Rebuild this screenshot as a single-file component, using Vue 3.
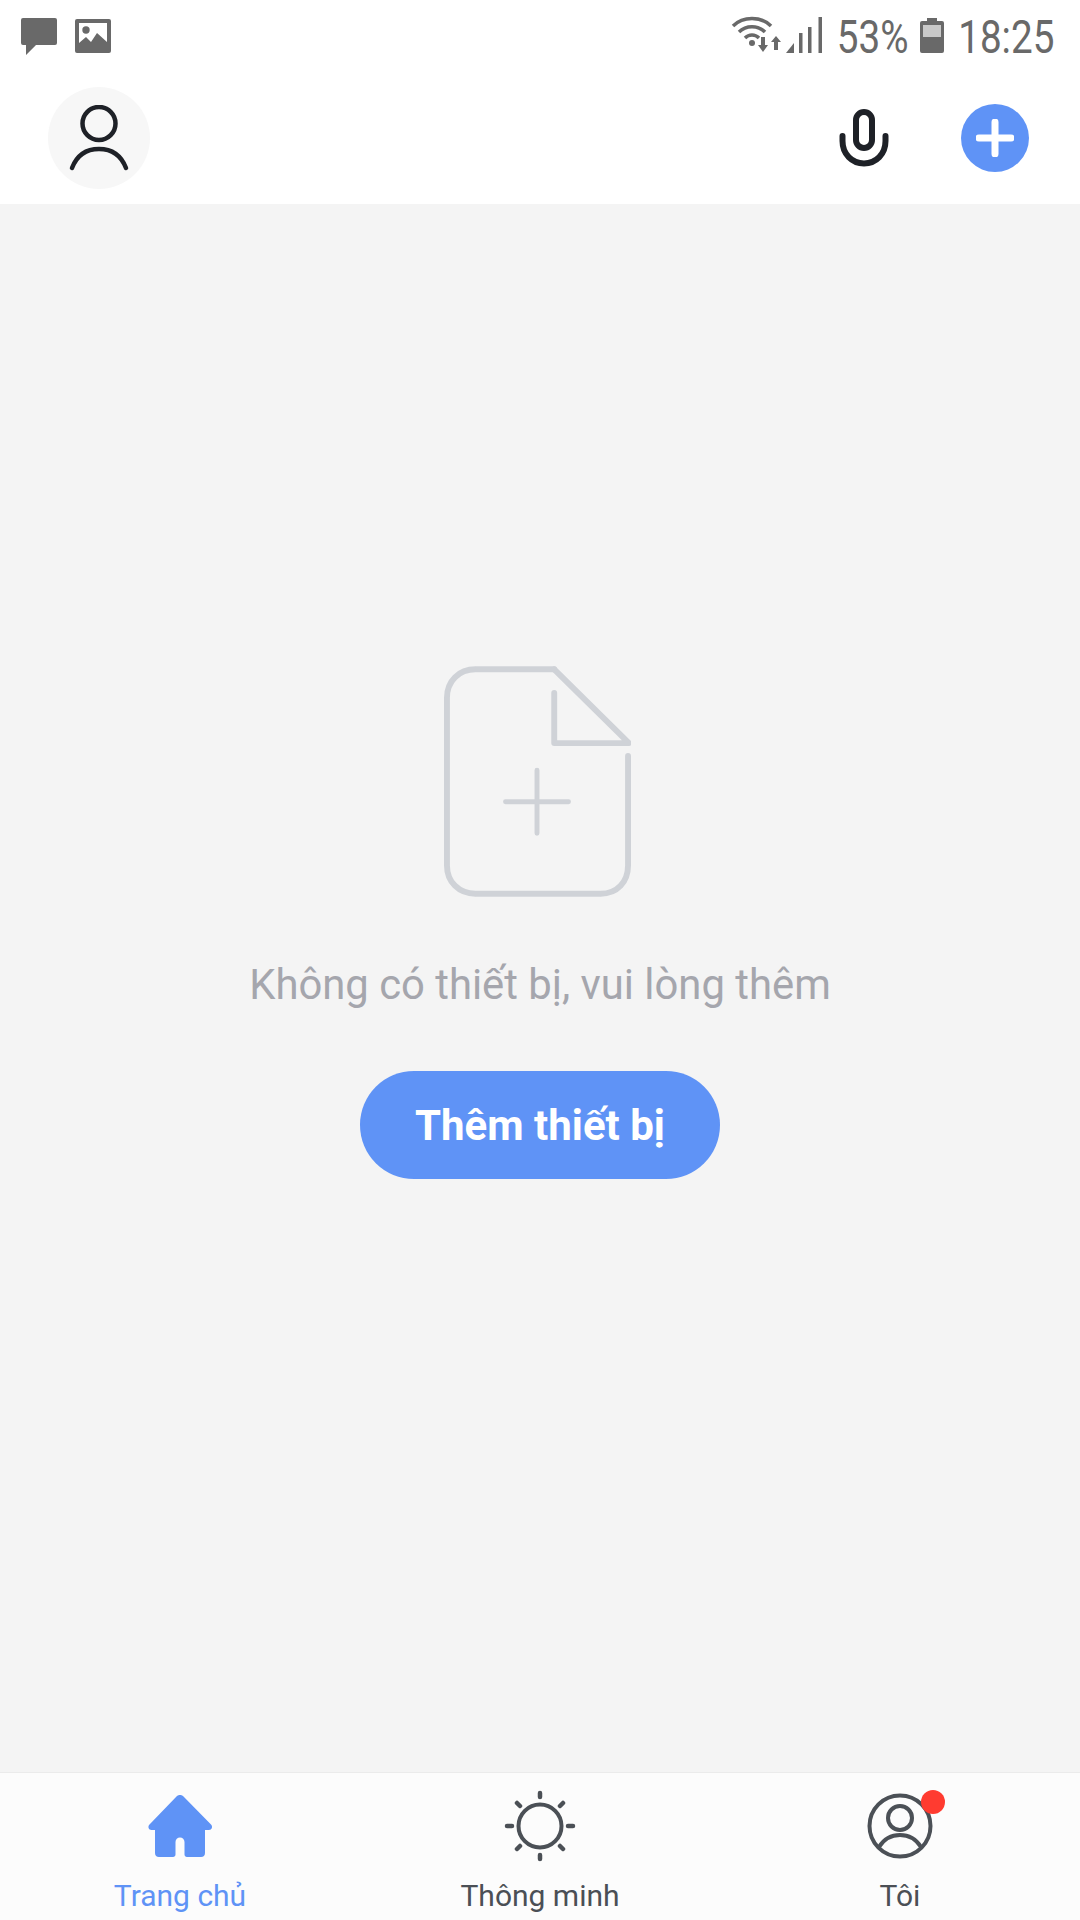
<template>
  <div class="screen">
    <div class="status-bar">
      <div class="status-left">
        <svg class="chat-icon" width="36" height="38" viewBox="0 0 36 38">
          <path d="M2 0h32a2 2 0 0 1 2 2v23a2 2 0 0 1-2 2H15L5 37V27H2a2 2 0 0 1-2-2V2a2 2 0 0 1 2-2z" fill="#696969" />
        </svg>
        <svg class="image-icon" width="36" height="34" viewBox="0 0 36 34">
          <path fill-rule="evenodd" d="M2 0h32a2 2 0 0 1 2 2v30a2 2 0 0 1-2 2H2a2 2 0 0 1-2-2V2a2 2 0 0 1 2-2zM4 4v20l7-6 5 5 6-9 10 9V4z" fill="#696969" />
          <circle cx="11" cy="11" r="3.700" fill="#696969" />
        </svg>
      </div>
      <div class="status-right">
        <svg width="92" height="42" viewBox="0 0 92 42">
          <g fill="none" stroke="#696969" stroke-width="3.500">
            <path d="M2 12C12 2 30 2 40 12" />
            <path d="M8 18C15 11 27 11 34 18" />
            <path d="M14 24C18 20 24 20 28 24" />
          </g>
          <circle cx="21" cy="29" r="3" fill="#696969" />
          <path d="M30 23h4v8h3l-5 7-5-7h3z" fill="#696969" />
          <path d="M43 36v-8h-3l5-6 5 6h-3v8z" fill="#696969" />
          <path d="M55 39l8-10v10z" fill="#696969" />
          <rect x="68" y="19" width="3.500" height="20" fill="#696969" />
          <rect x="77" y="13" width="3.500" height="26" fill="#696969" />
          <rect x="87.500" y="3" width="3.500" height="36" fill="#696969" />
        </svg>
        <span class="status-text pct">53%</span>
        <svg class="battery" width="24" height="35" viewBox="0 0 24 35">
          <path d="M7 0h10v3h5a2 2 0 0 1 2 2v28a2 2 0 0 1-2 2H2a2 2 0 0 1-2-2V5a2 2 0 0 1 2-2h5z" fill="#696969" />
          <rect x="3" y="7" width="18" height="12" fill="#c9c9c9" />
        </svg>
        <span class="status-text time">18:25</span>
      </div>
    </div>

    <header class="top-bar">
      <div class="avatar">
        <svg width="60" height="66" viewBox="0 0 60 66">
          <circle cx="30" cy="18.500" r="16.500" fill="none" stroke="#1e2127" stroke-width="4.500" />
          <path d="M3 63C8 50 18 44 30 44s22 6 27 19" fill="none" stroke="#1e2127" stroke-width="4.500" stroke-linecap="round" />
        </svg>
      </div>
      <div class="top-actions">
        <svg width="50" height="58" viewBox="0 0 50 58">
          <rect x="17" y="3" width="16" height="36" rx="8" fill="none" stroke="#1e2127" stroke-width="6" />
          <path d="M3.500 27v5c0 13 9.500 22.500 21.500 22.500S46.500 45 46.500 32v-5" fill="none" stroke="#1e2127" stroke-width="6" stroke-linecap="round" />
        </svg>
        <button class="add-round">
          <svg width="38" height="38" viewBox="0 0 38 38">
            <path d="M19 3v32M3 19h32" stroke="#fff" stroke-width="7" stroke-linecap="round" />
          </svg>
        </button>
      </div>
    </header>

    <main class="empty">
      <svg class="doc-icon" width="187" height="231" viewBox="0 0 190 234">
        <g fill="none" stroke="#cfd2d7" stroke-width="6" stroke-linecap="round" stroke-linejoin="round">
          <path d="M112 3H32C15 3 3 15 3 32v170c0 17 12 29 29 29h127c17 0 28-12 28-29V91" />
          <path d="M112 3l76 75H112V27" />
          <path d="M94.500 105.500v64M62.500 137.500h64" stroke-width="5" />
        </g>
      </svg>
      <p class="empty-text">{{ emptyText }}</p>
      <button class="add-btn">Thêm thiết bị</button>
    </main>

    <nav class="tab-bar">
      <div v-for="tab in tabs" :key="tab.id" class="tab" :class="{ active: tab.id === 'home' }">
        <div class="tab-icon">
          <svg v-if="tab.id === 'home'" width="66" height="62" viewBox="0 0 66 62">
            <path d="M33 0c1.500 0 2.500.5 3.500 1.500l27.500 28c2 2 1 5.500-2 5.500H58v23c0 2.500-1.500 4-4 4H40c-1.500 0-2.500-1-2.500-2.500V47c0-2.500-2-4.500-4.500-4.500s-4.500 2-4.500 4.500v12.500c0 1.500-1 2.500-2.500 2.500H12c-2.500 0-4-1.500-4-4V35H4.500c-3 0-4-3.500-2-5.500l27-28C30.500.5 31.500 0 33 0z" fill="#5f93f6" />
          </svg>
          <svg v-else-if="tab.id === 'smart'" width="72" height="72" viewBox="0 0 72 72">
            <circle cx="36" cy="36" r="21.500" fill="none" stroke="#4b5056" stroke-width="4" />
            <path d="M36 3v4M36 65v4M3 36h5M64 36h5M13 13l3 3M56 56l3 3M59 13l-3 3M16 56l-3 3" stroke="#4b5056" stroke-width="4.500" stroke-linecap="round" />
          </svg>
          <template v-else>
            <svg width="66" height="66" viewBox="0 0 66 66">
              <circle cx="33" cy="33" r="30.500" fill="none" stroke="#4b5056" stroke-width="4" />
              <circle cx="33" cy="25" r="12" fill="none" stroke="#4b5056" stroke-width="4" />
              <path d="M12 54c5-8 13-12 21-12s16 4 21 12" fill="none" stroke="#4b5056" stroke-width="4" />
            </svg>
            <span class="badge"></span>
          </template>
        </div>
        <span class="tab-label">{{ tab.label }}</span>
      </div>
    </nav>
  </div>
</template>

<script setup>
const emptyText = 'Không có thiết bị, vui lòng thêm'

const tabs = [
  { id: 'home', label: 'Trang chủ' },
  { id: 'smart', label: 'Thông minh' },
  { id: 'me', label: 'Tôi' },
]
</script>

<style>
html,
body {
  margin: 0;
  background: #f4f4f4;
}
</style>

<style scoped>
.screen {
  width: 1080px;
  height: 1920px;
  display: flex;
  flex-direction: column;
  font-family: Roboto, "Liberation Sans", sans-serif;
  background: #f4f4f4;
  overflow: hidden;
}

.status-bar {
  height: 72px;
  flex-shrink: 0;
  display: flex;
  justify-content: space-between;
  align-items: flex-start;
  padding: 14px 16px 0 21px;
  box-sizing: border-box;
  background: #fff;
}

.status-left {
  display: flex;
  gap: 18px;
  padding-top: 4px;
}

.image-icon {
  margin-top: 1px;
}

.status-right {
  display: flex;
  align-items: flex-start;
}

.status-text {
  display: inline-block;
  margin-top: -2px;
  font-size: 46px;
  line-height: 50px;
  color: #696969;
  transform: scaleX(0.84);
}

.pct {
  margin-left: 7px;
  margin-right: 5px;
}

.battery {
  margin-top: 4px;
  margin-right: 5px;
}

.top-bar {
  height: 132px;
  flex-shrink: 0;
  display: flex;
  justify-content: space-between;
  align-items: center;
  padding: 0 51px 0 48px;
  box-sizing: border-box;
  background: #fff;
}

.avatar {
  width: 102px;
  height: 102px;
  border-radius: 50%;
  background: #f7f7f7;
  display: flex;
  align-items: center;
  justify-content: center;
}

.top-actions {
  display: flex;
  align-items: center;
  gap: 72px;
}

.add-round {
  width: 68px;
  height: 68px;
  border: none;
  padding: 0;
  border-radius: 50%;
  background: #5f93f6;
  display: flex;
  align-items: center;
  justify-content: center;
}

.empty {
  flex: 1;
  display: flex;
  flex-direction: column;
  align-items: center;
  padding-top: 462px;
}

.doc-icon {
  margin-left: -6px;
}

.empty-text {
  margin: 64px 0 0;
  font-size: 41.800px;
  line-height: 48px;
  color: #a5a6ad;
}

.add-btn {
  margin-top: 62px;
  width: 360px;
  height: 108px;
  border: none;
  border-radius: 54px;
  background: #5f93f6;
  color: #fff;
  font-family: inherit;
  font-size: 42px;
  font-weight: 700;
}

.tab-bar {
  height: 148px;
  flex-shrink: 0;
  display: grid;
  grid-template-columns: repeat(3, 1fr);
  background: #fcfcfc;
  border-top: 1px solid #ebebeb;
  box-sizing: border-box;
}

.tab {
  display: flex;
  flex-direction: column;
  align-items: center;
  padding-top: 17px;
  color: #4b4f55;
}

.tab.active {
  color: #5f93f6;
}

.tab-icon {
  position: relative;
  height: 72px;
  display: flex;
  align-items: center;
  justify-content: center;
}

.badge {
  position: absolute;
  top: 0;
  left: 54px;
  width: 24px;
  height: 24px;
  border-radius: 50%;
  background: #ff3b30;
}

.tab-label {
  margin-top: 16px;
  font-size: 30px;
  line-height: 36px;
}
</style>
